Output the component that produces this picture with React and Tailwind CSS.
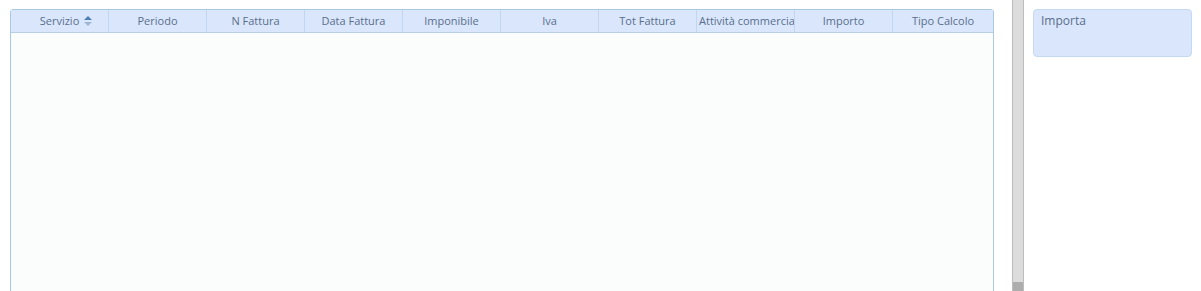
import React from 'react';

const columns = [
  'Servizio',
  'Periodo',
  'N Fattura',
  'Data Fattura',
  'Imponibile',
  'Iva',
  'Tot Fattura',
  'Attività commerciale',
  'Importo',
  'Tipo Calcolo',
];

const SortIcon = () => (
  <svg className="absolute left-full top-1/2 ml-[5px] -translate-y-1/2" width="8" height="10" viewBox="0 0 8 10">
    <path d="M4 0 L8 4 L0 4 Z" fill="#4d7fb9" />
    <path d="M0 6 L8 6 L4 10 Z" fill="#9fb6d2" />
  </svg>
);

export default function App() {
  return (
    <div
      className="flex h-[291px] w-[1201px] overflow-hidden bg-white pl-[10px]"
      style={{ fontFamily: '"Open Sans", "Liberation Sans", sans-serif' }}
    >
      {/* griglia */}
      <div className="mt-[9px] flex h-[300px] w-[984px] flex-col rounded-t-[3px] border border-[#a9c9e2] bg-[#fbfdfd]">
        <div className="flex h-[23px] border-b border-[#b6cfe6] bg-[#d9e6fb] text-[11px] text-[#5a6f8e]">
          {columns.map((col, i) => (
            <div
              key={col}
              className={
                i === 9
                  ? 'flex flex-1 items-center justify-center overflow-hidden whitespace-nowrap'
                  : i === 7
                  ? 'flex w-[98px] shrink-0 items-center overflow-hidden whitespace-nowrap border-r border-[#c3d6ee] pl-[2px]'
                  : 'flex w-[98px] shrink-0 items-center justify-center overflow-hidden whitespace-nowrap border-r border-[#c3d6ee]'
              }
            >
              <span className="relative">
                {col}
                {i === 0 && <SortIcon />}
              </span>
            </div>
          ))}
        </div>
        <div className="flex-1" />
      </div>

      {/* scrollbar */}
      <div className="ml-[18px] flex h-[291px] w-[12px] shrink-0 flex-col border-x border-[#bdbdbd] bg-[#dcdcdc]">
        <div className="flex-1" />
        <div className="h-[9px] bg-[#adadad]" />
      </div>

      {/* pannello azioni */}
      <div className="ml-[9px] mt-[9px] h-[48px] w-[159px] shrink-0 rounded-[4px] border border-[#c6d9f3] bg-[#d9e6fb] pl-[7px] pt-[2px] text-[12px] text-[#5a6f8e]">
        Importa
      </div>
    </div>
  );
}
